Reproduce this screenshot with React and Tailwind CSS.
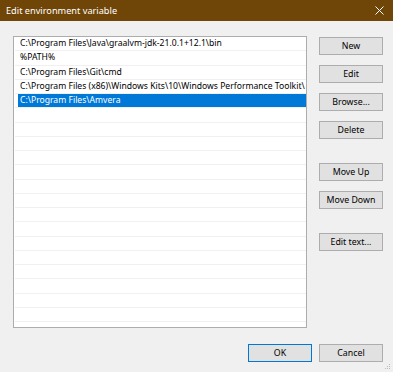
import React from 'react';

const paths = [
  'C:\\Program Files\\Java\\graalvm-jdk-21.0.1+12.1\\bin',
  '%PATH%',
  'C:\\Program Files\\Git\\cmd',
  'C:\\Program Files (x86)\\Windows Kits\\10\\Windows Performance Toolkit\\',
  'C:\\Program Files\\Amvera',
];

const font = { fontFamily: '"Segoe UI", "Noto Sans", sans-serif' };

function Btn({ children, primary }) {
  return (
    <div
      className={`w-[64px] h-[18px] flex items-center justify-center bg-[#e1e1e1] border text-[8.8px] text-black leading-none ${
        primary ? 'border-[#0078d7]' : 'border-[#adadad]'
      }`}
    >
      {children}
    </div>
  );
}

export default function App() {
  const rows = [];
  for (let i = 0; i < 21; i++) rows.push(paths[i] || '');

  return (
    <div className="w-[393px] h-[372px] bg-[#f0f0f0] flex flex-col overflow-hidden relative" style={font}>
      {/* title bar */}
      <div className="h-[21px] bg-[#6f4508] flex items-center justify-between pl-[6px] pr-[7px]">
        <span className="text-white text-[9.2px]">Edit environment variable</span>
        <svg width="9" height="9" viewBox="0 0 9 9" className="mr-[2px]">
          <path d="M0.5 0.5 L8.5 8.5 M8.5 0.5 L0.5 8.5" stroke="#fff" strokeWidth="1" />
        </svg>
      </div>

      {/* body */}
      <div className="flex pl-[13px] pt-[15px] gap-[12px]">
        <div className="w-[294px] h-[292px] bg-white border border-[#adadad] overflow-hidden pl-[1px]">
          {rows.map((p, i) => (
            <div key={i} className="h-[14.25px] border-b border-[#f0f0f0] pl-[3px]">
              <div
                className={`h-full flex items-center pl-[2px] text-[8.6px] whitespace-nowrap overflow-hidden ${
                  i === 4 ? 'bg-[#0078d7] text-white' : 'text-black'
                }`}
              >
                {p}
              </div>
            </div>
          ))}
        </div>

        <div className="flex flex-col pt-[1px]">
          <div className="flex flex-col gap-[10px]">
            <Btn>New</Btn>
            <Btn>Edit</Btn>
            <Btn>Browse...</Btn>
            <Btn>Delete</Btn>
          </div>
          <div className="flex flex-col gap-[10px] mt-[24px]">
            <Btn>Move Up</Btn>
            <Btn>Move Down</Btn>
          </div>
          <div className="mt-[24px]">
            <Btn>Edit text...</Btn>
          </div>
        </div>
      </div>

      {/* footer */}
      <div className="flex justify-end gap-[7px] pr-[10px] mt-[16px]">
        <Btn primary>OK</Btn>
        <Btn>Cancel</Btn>
      </div>

      {/* resize grip */}
      <svg width="6" height="6" viewBox="0 0 6 6" className="absolute right-[2px] bottom-[2px]">
        <rect x="4" y="0" width="1" height="1" fill="#bcbcbc" />
        <rect x="2" y="2" width="1" height="1" fill="#bcbcbc" />
        <rect x="4" y="2" width="1" height="1" fill="#bcbcbc" />
        <rect x="0" y="4" width="1" height="1" fill="#bcbcbc" />
        <rect x="2" y="4" width="1" height="1" fill="#bcbcbc" />
        <rect x="4" y="4" width="1" height="1" fill="#bcbcbc" />
      </svg>
    </div>
  );
}
